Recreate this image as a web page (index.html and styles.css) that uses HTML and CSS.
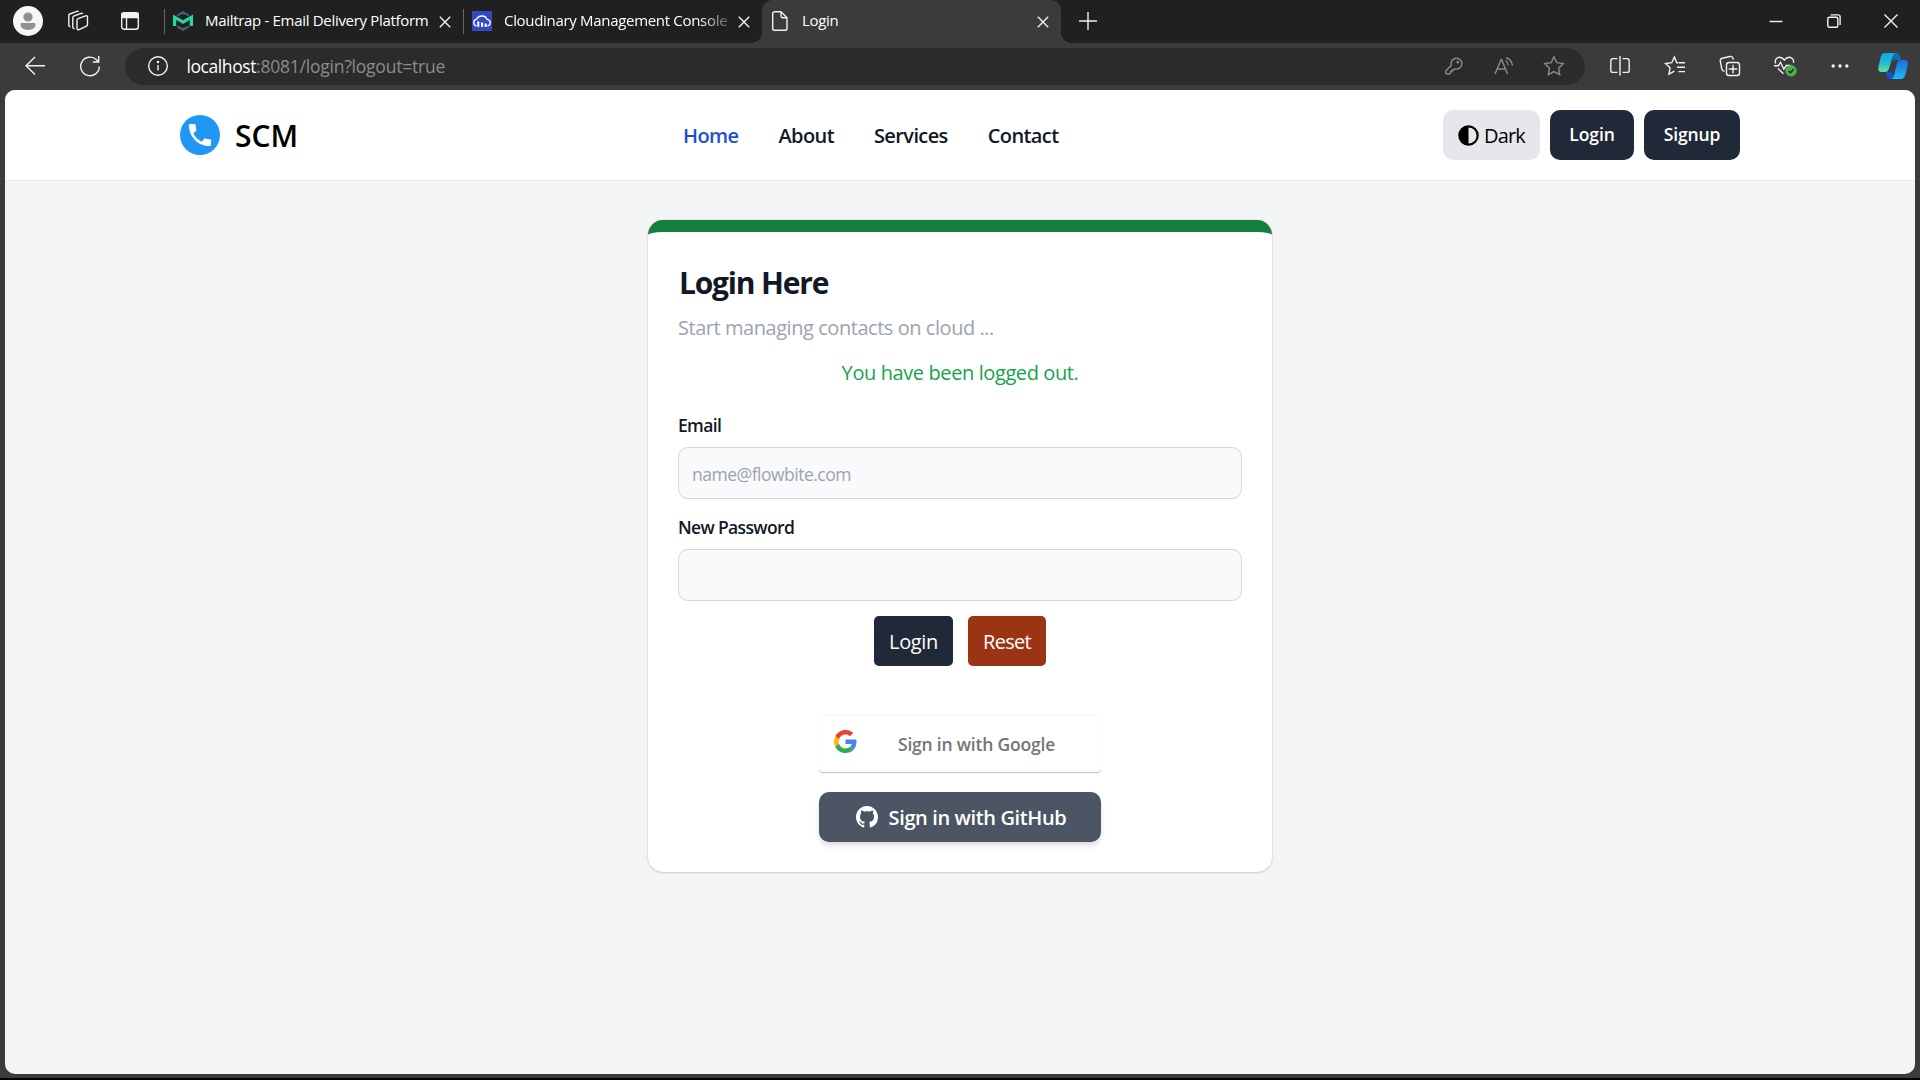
FILE: index.html
```html
<!DOCTYPE html>
<html lang="en">
<head>
<meta charset="utf-8">
<title>Login</title>
<link rel="stylesheet" href="styles.css">
</head>
<body>
<div class="browser">
  <div class="tabstrip">
    <span class="cell avatar-cell"><svg width="30" height="30" viewBox="0 0 30 30"><circle cx="15" cy="15" r="15" fill="#f7f7f7"/><circle cx="15" cy="11" r="4.6" fill="#919191"/><path d="M8.800 17h12.400c.8 0 1.300.5 1.300 1.300C22.500 22 19 24 15 24s-7.500-2-7.500-5.700c0-.8.5-1.300 1.300-1.300z" fill="#919191"/></svg></span>
    <span class="cell workspaces-cell"><svg width="22" height="22" viewBox="0 0 22 22" class="line"><path d="M11 8.600l7.500-2.800c1-.4 2 .2 2 1.200v7.600c0 .7-.4 1.300-1 1.500l-7.500 3.600c-1 .5-2-.2-2-1.200V10c0-.6.4-1.200 1-1.400z"/><path d="M7.500 18.500c-1 .2-1.700-.4-1.700-1.400V7.600c0-.7.4-1.200 1-1.500l7.400-2.800c.6-.2 1.200 0 1.600.4"/><path d="M3.400 16.500c-1 .2-1.600-.4-1.600-1.300V5.400c0-.7.3-1.200 1-1.400L10 1.300c.6-.2 1.200 0 1.600.4"/></svg></span>
    <span class="cell vtabs-cell"><svg width="20" height="20" viewBox="0 0 20 20" class="line"><rect x="1.700" y="1.700" width="16.600" height="16.600" rx="2.500"/><path d="M2 2.500h16v4H2z" fill="#f1f1f1"/><path d="M6.500 6v12"/></svg></span>
    <span class="tab-sep"></span>
    <div class="tab">
      <svg class="favicon" width="20" height="20" viewBox="0 0 20 20"><path d="M4 3.500L10 0l6 3.500v1.700L10 3 4 5.200zM4 16.500L10 20l6-3.500v-2L10 17l-6-2.500z" fill="#4c5b78"/><path d="M1.600 15V6.200L10 11.200l8.400-5V15" fill="none" stroke="#22d9a0" stroke-width="3.200"/></svg>
      <span class="tab-title"><span>Mailtrap - Email Delivery Platform</span></span>
      <svg class="tab-close" width="12" height="12" viewBox="0 0 12 12"><path d="M.8.8l10.400 10.400M11.200.8L.8 11.200"/></svg>
    </div>
    <span class="tab-sep"></span>
    <div class="tab">
      <svg class="favicon" width="20" height="20" viewBox="0 0 20 20"><rect width="20" height="20" fill="#3448c5"/><path d="M4.500 15C2.700 14.500 1.800 13.200 1.800 11.700c0-1.900 1.300-3.200 3-3.500C5.500 6.200 7.500 5 10 5s4.500 1.400 5 3.400c1.900.2 3.200 1.600 3.200 3.300 0 1.500-.9 2.800-2.700 3.300" fill="none" stroke="#fff" stroke-width="1.300"/><path d="M5 10.500h2.300V16H5.500zM8.800 11.500h2.300V16H9.200zM12.500 12.500h2.200V16h-2z" fill="#fff"/></svg>
      <span class="tab-title faded"><span>Cloudinary Management Console</span></span>
      <svg class="tab-close" width="12" height="12" viewBox="0 0 12 12"><path d="M.8.8l10.400 10.400M11.200.8L.8 11.200"/></svg>
    </div>
    <div class="tab active">
      <svg class="favicon" width="20" height="20" viewBox="0 0 20 20" fill="none" stroke="#f1f1f1" stroke-width="1.400"><path d="M4.500.7H11l6 6v10.800c0 1-.8 1.800-1.800 1.800H4.500c-1 0-1.800-.8-1.800-1.800v-15c0-1 .8-1.800 1.800-1.800zM11 .7V5c0 1 .7 1.700 1.700 1.700H17"/></svg>
      <span class="tab-title">Login</span>
      <svg class="tab-close" width="12" height="12" viewBox="0 0 12 12"><path d="M.8.8l10.400 10.400M11.200.8L.8 11.200"/></svg>
    </div>
    <span class="cell new-tab"><svg width="18" height="18" viewBox="0 0 18 18" class="line"><path d="M9 0v18M0 9h18"/></svg></span>
    <span class="cell win first"><svg width="14" height="14" viewBox="0 0 14 14" class="line"><path d="M.5 7.500h13"/></svg></span>
    <span class="cell win"><svg width="14" height="14" viewBox="0 0 14 14" class="line"><rect x=".8" y="3.200" width="10" height="10" rx="1.500"/><path d="M3.500.9h7.500c1.200 0 2.100.9 2.100 2.100V11"/></svg></span>
    <span class="cell win"><svg width="14" height="14" viewBox="0 0 14 14" class="line"><path d="M.5.5l13 13M13.500.5l-13 13"/></svg></span>
  </div>

  <div class="toolbar">
    <span class="cell tool"><svg width="20" height="20" viewBox="0 0 20 20" class="line"><path d="M10 1L1 9.800l9 8.800M1 9.800h19"/></svg></span>
    <span class="cell tool"><svg width="22" height="22" viewBox="0 0 22 22" class="line"><path d="M20.300 11.500a9.300 9.300 0 1 1-2.800-6.700l1.800 1.800M19.700 1v6h-6"/></svg></span>
    <div class="address">
      <span class="cell info"><svg width="22" height="22" viewBox="0 0 22 22" class="line"><circle cx="11" cy="11" r="9.300"/><path d="M11 10v5.500"/><circle cx="11" cy="7" r=".6" fill="#fff"/></svg></span>
      <span class="url"><span class="host">localhost</span><span class="path">:8081/login?logout=true</span></span>
      <span class="cell pill-tool"><svg width="18" height="18" viewBox="0 0 18 18" class="dim"><path d="M6.300 8.300a5.400 5.400 0 1 1 3.500 3.500L8.500 13H7v1.500H5.500V16L4.500 17H1.700c-.5 0-.8-.3-.8-.8v-2.400z"/><circle cx="12.800" cy="5.200" r=".7" fill="#8b8b8b"/></svg></span>
      <span class="cell pill-tool"><svg width="20" height="20" viewBox="0 0 20 20" class="dim"><path d="M1 18L7.200 3.500h.4L13.500 18M3.200 13h8.300M11.500 4.500c1.500 1 2.500 2.800 2.700 4.800M12 1.500c3.500 1.300 6 4.500 6.500 8"/></svg></span>
      <span class="cell pill-tool"><svg width="22" height="22" viewBox="0 0 22 22" class="dim"><path d="M11 1.700l2.800 6 6.500.9-4.700 4.600 1.100 6.500L11 16.600l-5.700 3.100 1.100-6.500L1.700 8.600l6.500-.9z"/></svg></span>
    </div>
    <span class="cell tool"><svg width="20" height="20" viewBox="0 0 20 20" class="line"><path d="M7.500 2.600H3C1.700 2.600.8 3.500.8 4.800v9.400c0 1.300.9 2.200 2.200 2.200h4.500M12.500 2.600H17c1.300 0 2.200.9 2.200 2.200v9.400c0 1.300-.9 2.200-2.200 2.200h-4.500M10 0v19.500"/></svg></span>
    <span class="cell tool"><svg width="22" height="22" viewBox="0 0 22 22" class="line"><path d="M14 7.700h-1.200L10.400 2 7.800 7.700l-6.300.8 4.600 4.300-1.200 6.400 5.500-3M14.500 7.800h6.500M13 12.200h8M14.500 16.600h6.500"/></svg></span>
    <span class="cell tool"><svg width="22" height="22" viewBox="0 0 22 22" class="line"><rect x="7.500" y="7.500" width="13" height="13" rx="2.500"/><path d="M14 9.800v8.400M9.800 14h8.400M5.500 16.200C4 16 3 15.200 2.800 14L1.300 6.200C1 4.800 1.800 3.600 3.200 3.300l7.800-1.800c1.400-.3 2.700.5 3 1.900l.3 1.300"/></svg></span>
    <span class="cell tool"><svg width="24" height="22" viewBox="0 0 24 22" class="line"><path d="M2.600 8.500C1.500 4.500 4 2.300 6.500 2.300c2 0 3.500 1 4.800 2.800 1.300-1.800 2.900-2.800 4.900-2.800 2.700 0 4.900 2.400 4.300 5.500M1 10.700h4.500l2-3.500 3.300 7 2.500-3.700h4.500M5 13.500l5.500 5.200"/><circle cx="18" cy="15.800" r="5.700" fill="#4caf50" stroke="none"/><path d="M15.500 16l1.900 1.800 3.300-3.600" stroke="#222"/></svg></span>
    <span class="cell tool"><svg width="18" height="4" viewBox="0 0 18 4"><g fill="#f1f1f1"><circle cx="2.200" cy="2" r="1.700"/><circle cx="9" cy="2" r="1.700"/><circle cx="15.800" cy="2" r="1.700"/></g></svg></span>
    <span class="cell copilot"><svg width="30" height="26" viewBox="0 0 30 26"><defs><linearGradient id="cpa" x1="0" y1="0" x2="0" y2="1"><stop offset="0" stop-color="#11a9e8"/><stop offset=".5" stop-color="#22b8cf"/><stop offset="1" stop-color="#5fe39a"/></linearGradient><linearGradient id="cpb" x1="0" y1="0" x2="0" y2="1"><stop offset="0" stop-color="#2468dd"/><stop offset="1" stop-color="#1bbcf7"/></linearGradient></defs><path d="M15 0h3.500c2 0 3 1.200 3.600 3.200L23 7h-4.500c-2 0-3 .8-3.600 2.500z" fill="#0b6fae"/><path d="M8 19h6l2 4-1 3h-2.500c-2 0-3-1.200-3.600-3.200z" fill="#1450d8"/><path d="M7 0h11c-1.800.3-2.600 1.500-3.200 3.200L11 15.500C10.200 18 9.200 19 7 19H3.500C.8 19 0 16.800.4 14L2.800 4C3.500 1.500 4.800 0 7 0z" fill="url(#cpa)"/><path d="M22 7h4.500c2.700 0 3.700 2 3.300 4.500L27.500 21c-.8 3.300-2.200 5-4.500 5H13c1.700-.3 2.300-1.300 2.900-3.200L19 10.500C19.700 8 20.300 7 22 7z" fill="url(#cpb)"/></svg></span>
  </div>

  <div class="page">
    <header class="navbar">
      <a class="brand"><svg width="40" height="40" viewBox="0 0 40 40"><circle cx="20" cy="20" r="20" fill="#2196f3"/><path transform="translate(5.200 5.200) scale(1.233)" fill="#fff" d="M6.620 10.790c1.440 2.830 3.760 5.140 6.590 6.590l2.200-2.200c.27-.27.67-.36 1.020-.24 1.120.37 2.330.57 3.570.57.55 0 1 .45 1 1V20c0 .55-.45 1-1 1-9.390 0-17-7.610-17-17 0-.55.45-1 1-1h3.500c.55 0 1 .45 1 1 0 1.250.2 2.450.57 3.570.11.35.03.74-.25 1.020l-2.200 2.200z"/></svg><span class="brand-name">SCM</span></a>
      <nav class="menu">
        <a class="current">Home</a>
        <a>About</a>
        <a>Services</a>
        <a>Contact</a>
      </nav>
      <div class="actions">
        <button class="theme"><svg width="21" height="21" viewBox="0 0 21 21"><circle cx="10.500" cy="10.500" r="9.200" fill="none" stroke="#000" stroke-width="2.200"/><path d="M10.500 1v19a9.500 9.500 0 0 1 0-19z"/></svg><span>Dark</span></button>
        <button class="dark-btn nav-login">Login</button>
        <button class="dark-btn nav-signup">Signup</button>
      </div>
    </header>

    <main class="content">
      <form class="card">
        <h1>Login Here</h1>
        <p class="subtitle">Start managing contacts on cloud ...</p>
        <p class="notice">You have been logged out.</p>
        <label>Email</label>
        <div class="field">name@flowbite.com</div>
        <label>New Password</label>
        <div class="field"></div>
        <div class="form-actions">
          <button class="submit">Login</button>
          <button class="reset">Reset</button>
        </div>
        <button class="google"><svg width="23" height="23" viewBox="0 0 48 48"><path fill="#EA4335" d="M24 9.500c3.540 0 6.710 1.220 9.210 3.600l6.850-6.850C35.900 2.380 30.470 0 24 0 14.620 0 6.510 5.380 2.560 13.220l7.980 6.190C12.430 13.720 17.740 9.500 24 9.500z"/><path fill="#4285F4" d="M46.980 24.550c0-1.570-.15-3.090-.38-4.550H24v9.020h12.940c-.58 2.960-2.260 5.480-4.780 7.180l7.730 6c4.510-4.180 7.090-10.360 7.090-17.650z"/><path fill="#FBBC05" d="M10.530 28.590c-.48-1.450-.76-2.990-.76-4.590s.27-3.140.76-4.590l-7.980-6.190C.92 16.460 0 20.120 0 24c0 3.880.92 7.540 2.560 10.780l7.970-6.190z"/><path fill="#34A853" d="M24 48c6.480 0 11.930-2.130 15.890-5.810l-7.730-6c-2.150 1.450-4.920 2.300-8.160 2.300-6.260 0-11.570-4.220-13.470-9.910l-7.980 6.190C6.510 42.620 14.620 48 24 48z"/></svg><span>Sign in with Google</span></button>
        <button class="github"><svg width="22" height="22" viewBox="0 0 16 16"><path fill="#fff" d="M8 0C3.580 0 0 3.580 0 8c0 3.540 2.290 6.530 5.470 7.590.4.070.55-.17.55-.38 0-.19-.01-.82-.01-1.490-2.010.37-2.530-.49-2.690-.94-.09-.23-.48-.94-.82-1.130-.28-.15-.68-.52-.01-.53.63-.01 1.080.58 1.230.82.72 1.210 1.870.87 2.330.66.07-.52.28-.87.51-1.070-1.780-.2-3.640-.89-3.640-3.950 0-.87.31-1.590.82-2.150-.08-.2-.36-1.020.08-2.120 0 0 .67-.21 2.200.82.64-.18 1.320-.27 2-.27s1.360.09 2 .27c1.530-1.040 2.200-.82 2.200-.82.44 1.100.16 1.920.08 2.120.51.56.82 1.270.82 2.150 0 3.070-1.870 3.750-3.650 3.950.29.25.54.73.54 1.480 0 1.070-.01 1.930-.01 2.200 0 .21.15.46.55.38A8.010 8.010 0 0 0 16 8c0-4.420-3.580-8-8-8z"/></svg><span>Sign in with GitHub</span></button>
      </form>
    </main>
  </div>
</div>
</body>
</html>
```
FILE: styles.css
```css
* { box-sizing: border-box; }

body {
  margin: 0;
  background: #000;
  font-family: "Open Sans", "Noto Sans", sans-serif;
  font-size: 20px;
  line-height: 30px;
  color: #000;
}

svg { display: block; flex: none; }
h1, p { margin: 0; }
span, a, button { white-space: nowrap; }

button {
  border: 0;
  padding: 0;
  font: inherit;
  letter-spacing: inherit;
  display: flex;
  align-items: center;
  justify-content: center;
}

.line { fill: none; stroke: #f1f1f1; stroke-width: 1.4; }
.dim { fill: none; stroke: #8b8b8b; stroke-width: 1.4; }
.cell { display: flex; flex: none; align-items: center; justify-content: center; }

/* Browser window */
.browser {
  width: 1920px;
  height: 1078px;
  display: flex;
  flex-direction: column;
  background: #3b3b3b;
}

.tabstrip {
  flex: none;
  height: 43px;
  display: flex;
  align-items: center;
  background: #202020;
}
.tabstrip .cell { padding-bottom: 1px; }
.avatar-cell { width: 56px; }
.workspaces-cell { width: 43px; }
.vtabs-cell { width: 62px; margin-right: 3px; }
.tab-sep { flex: none; width: 1px; height: 25px; background: #666; }

.tab {
  flex: none;
  width: 298px;
  height: 43px;
  padding: 0 12px 0 8px;
  display: flex;
  align-items: center;
  color: #fff;
  font-size: 15px;
  line-height: 20px;
  letter-spacing: -.31px;
}
.favicon { margin-bottom: 1px; }
.tab-title { width: 226px; margin: 0 auto 3px 12px; overflow: hidden; }
.faded { -webkit-mask-image: linear-gradient(90deg, #000 195px, rgba(0, 0, 0, .3) 222px); }
.tab-close { fill: none; stroke: #f1f1f1; stroke-width: 1.4; }
.tab.active {
  width: 299px;
  position: relative;
  background: #3b3b3b;
  border-radius: 10px 10px 0 0;
}
.tab.active::before,
.tab.active::after {
  content: "";
  position: absolute;
  bottom: 0;
  width: 10px;
  height: 10px;
}
.tab.active::before { left: -10px; background: radial-gradient(circle at 0 0, transparent 9.5px, #3b3b3b 10px); }
.tab.active::after { right: -10px; background: radial-gradient(circle at 100% 0, transparent 9.5px, #3b3b3b 10px); }
.new-tab { width: 54px; }
.win { width: 57.5px; }
.win.first { margin-left: auto; }

.toolbar {
  flex: none;
  height: 47px;
  padding-left: 7.5px;
  display: flex;
  align-items: center;
}
.tool { width: 55px; padding-bottom: 1px; }
.copilot { width: 50px; padding-bottom: 1px; }
.address {
  flex: none;
  width: 1460px;
  height: 37px;
  margin: 0 7.5px;
  padding: 0 6px 1px 12.5px;
  display: flex;
  align-items: center;
  border-radius: 19px;
  background: #2b2b2b;
}
.info { width: 40px; }
.url { flex: 1; margin-left: 9px; padding-bottom: 1px; font-size: 17.5px; line-height: 24px; }
.host { color: #fff; letter-spacing: -.42px; }
.path { color: #8c8c8c; letter-spacing: -.22px; }
.pill-tool { width: 50px; }

/* Web page */
.page {
  height: 984px;
  margin: 0 5px;
  overflow: hidden;
  border-radius: 10px;
  background: #f3f4f6;
}

.navbar {
  height: 91px;
  padding: 20px 175px;
  display: grid;
  grid-template-columns: 503px 1fr auto;
  align-items: start;
  background: #fff;
  border-bottom: 1px solid #e5e7eb;
}
.brand { display: flex; align-items: center; padding-top: 5px; gap: 15px; }
.brand-name { padding-top: 2px; font-size: 30px; line-height: 38px; font-weight: 600; }
.menu { display: flex; padding-top: 11px; gap: 40px; font-weight: 600; letter-spacing: -.6px; color: #111827; }
.current { color: #1d4ed8; }
.actions { display: flex; gap: 10px; }
.actions button { height: 50px; border-radius: 10px; }
.actions .theme { width: 97px; background: #e5e7eb; gap: 5px; letter-spacing: -.8px; }
.theme span { padding-top: 2px; }
.actions .dark-btn {
  padding-bottom: 3px;
  color: #fff;
  background: #1f2937;
  font-size: 17.5px;
  font-weight: 600;
  letter-spacing: -.1px;
}
.nav-login { width: 84px; }
.nav-signup { width: 96px; }

.content { display: flex; justify-content: center; padding-top: 39px; }
.card {
  width: 624px;
  height: 652px;
  padding: 31px 30px 30px;
  display: flex;
  flex-direction: column;
  border-top: 12px solid #15803d;
  border-radius: 15px;
  background: #fff;
  box-shadow: 0 1px 3px rgba(0, 0, 0, .1), 0 1px 2px -1px rgba(0, 0, 0, .1), 0 0 0 1px #e9ebee;
}
.card h1 {
  margin-bottom: 10px;
  padding-left: 1px;
  font-size: 30px;
  line-height: 40px;
  letter-spacing: -1.2px;
  color: #111827;
}
.subtitle { margin-bottom: 15px; letter-spacing: -.45px; color: #9ca3af; }
.notice { margin-bottom: 25px; text-align: center; letter-spacing: -.4px; color: #16a34a; }
.card label {
  padding-top: 1px;
  margin: -1px 0 9px;
  font-size: 17.5px;
  line-height: 25px;
  font-weight: 600;
  letter-spacing: -.65px;
  color: #111827;
}
.field {
  height: 52px;
  margin-bottom: 16px;
  padding: 14px 13px 12px;
  border: 1px solid #d1d5db;
  border-radius: 10px;
  background: #f9fafb;
  color: #9ca3af;
  font-size: 17.5px;
  line-height: 25px;
  letter-spacing: -.5px;
}
.form-actions { display: flex; justify-content: center; gap: 15px; margin: -1px 0 50px; }
.form-actions button { height: 50px; padding-top: 2px; border-radius: 5px; color: #fff; }
.form-actions .submit { width: 79px; background: #1f2937; letter-spacing: -.35px; }
.form-actions .reset { width: 78px; background: #9a3412; letter-spacing: -.7px; }
.google {
  width: 282px;
  height: 56px;
  margin: 0 auto 20px;
  padding-left: 15px;
  justify-content: flex-start;
  gap: 41px;
  border-radius: 4px;
  background: #fff;
  color: #757575;
  font-size: 17.5px;
  font-weight: 600;
  letter-spacing: -.2px;
  box-shadow: 0 -1px 0 rgba(0, 0, 0, .04), 0 1px 1px rgba(0, 0, 0, .25);
}
.google svg { margin-bottom: 5px; }
.github {
  width: 282px;
  height: 50px;
  margin: 0 auto;
  padding-left: 2px;
  gap: 11px;
  border-radius: 10px;
  background: #4b5563;
  color: #fff;
  font-weight: 600;
  letter-spacing: -.37px;
  box-shadow: 0 5px 7px -1px rgba(0, 0, 0, .1), 0 2px 5px -2px rgba(0, 0, 0, .1);
}
.github span { padding-top: 2px; }
```
